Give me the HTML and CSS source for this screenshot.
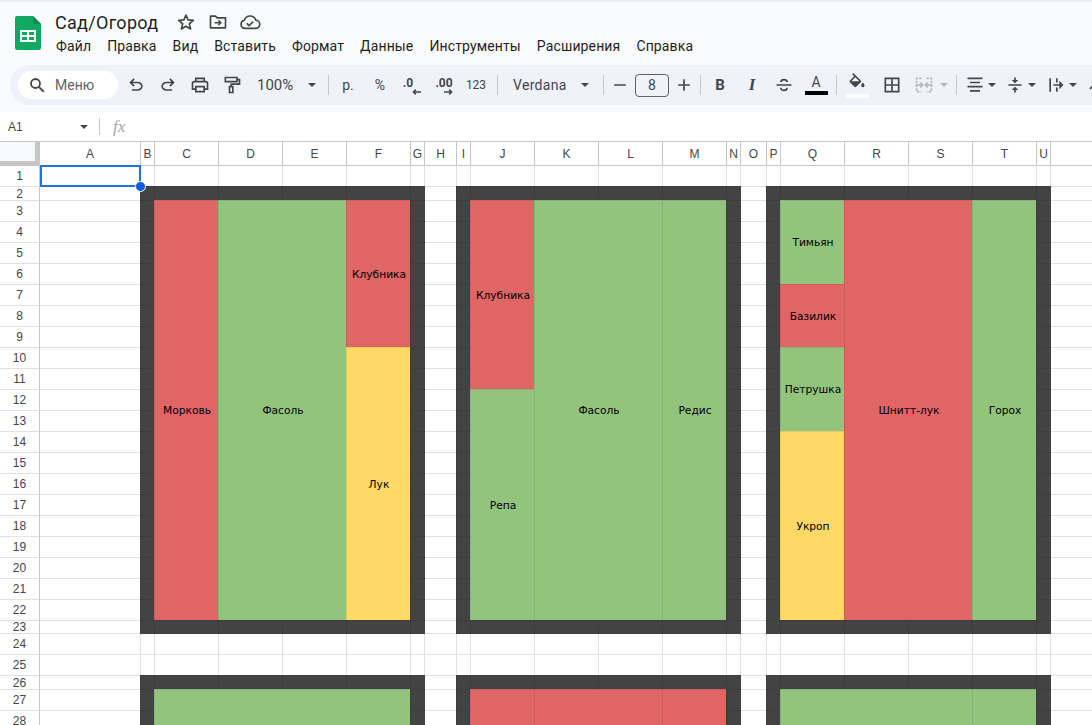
FILE: index.html
```html
<!DOCTYPE html>
<html lang="ru">
  <head>
    <meta charset="UTF-8" />
    <title>Сад/Огород</title>
    <link rel="stylesheet" href="styles.css">
  </head>
  <body>
    <header class="topbar">
      <svg class="logo" viewBox="0 0 26 34" width="26" height="34">
        <path fill="#11a861" d="M2 0h16l8 8v24a2 2 0 0 1-2 2H2a2 2 0 0 1-2-2V2a2 2 0 0 1 2-2z"/>
        <path fill="#0d8a4e" d="M18 0l8 8h-6a2 2 0 0 1-2-2z"/>
        <path fill="#fff" d="M5 14h16v12H5z M7 16v3h5v-3z M14 16v3h5v-3z M7 21v3h5v-3z M14 21v3h5v-3z" fill-rule="evenodd"/>
      </svg>
      <div class="doc">
        <div class="title-row">
          <span class="title">Сад/Огород</span>
          <button class="title-icon">
            <svg viewBox="0 0 24 24" width="20" height="20" fill="none" stroke="#444746" stroke-width="2" stroke-linejoin="round"><path d="M12 3.600l2.500 5.800 6.300.6-4.800 4.100 1.500 6.200-5.500-3.300-5.500 3.300 1.500-6.200-4.800-4.100 6.300-.6z"/></svg>
          </button>
          <button class="title-icon">
            <svg viewBox="0 0 24 24" width="20" height="20" fill="none" stroke="#444746" stroke-width="2" stroke-linejoin="round"><path d="M3 19V5h6l2 2h10v12z"/><path d="M8 13h7M12.500 10l3 3-3 3" stroke-width="1.800"/></svg>
          </button>
          <button class="title-icon">
            <svg viewBox="0 0 24 24" width="22" height="22" fill="none" stroke="#444746" stroke-width="1.800" stroke-linejoin="round"><path d="M6.500 19a4.500 4.500 0 0 1-.6-8.900A6.500 6.500 0 0 1 18.300 10a4.500 4.500 0 0 1-.3 9z"/><path d="M8.500 13.500l2.500 2.500 4.500-4.500"/></svg>
          </button>
        </div>
        <nav class="menu">
          <span>Файл</span>
          <span>Правка</span>
          <span>Вид</span>
          <span>Вставить</span>
          <span>Формат</span>
          <span>Данные</span>
          <span>Инструменты</span>
          <span>Расширения</span>
          <span>Справка</span>
        </nav>
      </div>
    </header>

    <div class="toolbar">
      <div class="search">
        <svg viewBox="0 0 24 24" width="18" height="18" fill="none" stroke="#444746" stroke-width="2.400"><circle cx="10" cy="10" r="6"/><path d="M14.500 14.500L21 21"/></svg>
        <span>Меню</span>
      </div>
      <button class="tool">
        <svg viewBox="0 0 24 24" width="20" height="20" fill="#444746"><path d="M7 19v-2h7.100q1.575 0 2.738-1T18 13.500q0-1.500-1.162-2.500T14.100 10H7.800l2.600 2.600L9 14 4 9l5-5 1.400 1.400L7.800 8h6.300q2.425 0 4.163 1.575Q20 11.150 20 13.500t-1.737 3.925Q16.525 19 14.100 19Z"/></svg>
      </button>
      <button class="tool flip">
        <svg viewBox="0 0 24 24" width="20" height="20" fill="#444746"><path d="M7 19v-2h7.100q1.575 0 2.738-1T18 13.500q0-1.500-1.162-2.500T14.100 10H7.800l2.600 2.600L9 14 4 9l5-5 1.400 1.400L7.800 8h6.300q2.425 0 4.163 1.575Q20 11.150 20 13.500t-1.737 3.925Q16.525 19 14.100 19Z"/></svg>
      </button>
      <button class="tool">
        <svg viewBox="0 0 24 24" width="20" height="20" fill="none" stroke="#444746" stroke-width="2"><path d="M7 8V4h10v4"/><path d="M7 17H3v-7a2 2 0 0 1 2-2h14a2 2 0 0 1 2 2v7h-4"/><path d="M7 14h10v6H7z"/></svg>
      </button>
      <button class="tool">
        <svg viewBox="0 0 24 24" width="20" height="20" fill="none" stroke="#444746" stroke-width="2"><path d="M4 3h14v5H4z"/><path d="M18 5.500h3V11H11v3"/><path d="M9 14h4v7H9z"/></svg>
      </button>
      <div class="select zoom-select"><span>100%</span><i class="caret"></i></div>
      <i class="sep"></i>
      <button class="tool text-tool">р.</button>
      <button class="tool text-tool">%</button>
      <button class="tool decimal less">
        <b>.0</b>
        <svg viewBox="0 0 9 6" width="9" height="6" fill="none" stroke="#444746" stroke-width="1.500"><path d="M9 3H1.500M3.800.6L1.400 3l2.400 2.400"/></svg>
      </button>
      <button class="tool decimal">
        <b>.00</b>
        <svg viewBox="0 0 9 6" width="9" height="6" fill="none" stroke="#444746" stroke-width="1.500"><path d="M0 3h7.500M5.200.6L7.600 3 5.200 5.400"/></svg>
      </button>
      <button class="tool text-tool small">123</button>
      <i class="sep before-font"></i>
      <div class="select font-select"><span>Verdana</span><i class="caret"></i></div>
      <i class="sep after-font"></i>
      <button class="tool">
        <svg viewBox="0 0 24 24" width="20" height="20" fill="#444746"><path d="M5 11h14v2H5z"/></svg>
      </button>
      <div class="font-size">8</div>
      <button class="tool">
        <svg viewBox="0 0 24 24" width="20" height="20" fill="#444746"><path d="M5 11h6V5h2v6h6v2h-6v6h-2v-6H5z"/></svg>
      </button>
      <i class="sep after-size"></i>
      <button class="tool text-tool bold">B</button>
      <button class="tool text-tool italic">I</button>
      <button class="tool">
        <svg viewBox="0 0 24 24" width="20" height="20" fill="none" stroke="#444746" stroke-width="2"><path d="M3 12h18"/><path d="M16 8.500C15.500 6.500 14 5.500 12 5.500S8.500 6.500 8.300 8.500M8 15.500c.5 2 2 3 4 3s3.500-1 3.700-3"/></svg>
      </button>
      <button class="tool text-color">
        <span>A</span>
        <i class="swatch black"></i>
      </button>
      <i class="sep before-fill"></i>
      <button class="tool text-color">
        <svg viewBox="0 0 24 24" width="20" height="20" fill="#444746"><path d="M16.560 8.940L7.620 0 6.210 1.410l2.380 2.380-5.150 5.150c-.59.59-.59 1.540 0 2.120l5.500 5.500c.29.29.68.44 1.060.44s.77-.15 1.060-.44l5.500-5.500c.59-.58.59-1.530 0-2.120zM5.210 10L10 5.210 14.790 10H5.210zM19 11.500s-2 2.170-2 3.500c0 1.100.9 2 2 2s2-.9 2-2c0-1.330-2-3.500-2-3.500z"/></svg>
        <i class="swatch white"></i>
      </button>
      <button class="tool borders">
        <svg viewBox="0 0 24 24" width="20" height="20" fill="none" stroke="#444746" stroke-width="2"><path d="M4 4h16v16H4zM12 4v16M4 12h16"/></svg>
      </button>
      <button class="tool">
        <svg viewBox="0 0 24 24" width="20" height="20" fill="none" stroke="#b4b6b8" stroke-width="2"><path d="M9 4H3v16h6M15 4h6v16h-6" stroke-dasharray="3 1.500"/><path d="M3 12h7M7.500 9l3 3-3 3M21 12h-7M16.500 9l-3 3 3 3"/></svg>
      </button>
      <i class="caret faded"></i>
      <i class="sep before-align"></i>
      <button class="tool narrow">
        <svg viewBox="0 0 24 24" width="20" height="20" fill="#444746"><path d="M3 3h18v2H3zM6 8h12v2H6zM3 13h18v2H3zM6 18h12v2H6z"/></svg>
      </button>
      <i class="caret after-narrow"></i>
      <button class="tool narrow spaced">
        <svg viewBox="0 0 24 24" width="20" height="20" fill="#444746"><path d="M4 11h16v2H4zM11 3h2v3h3l-4 4-4-4h3zM11 21h2v-3h3l-4-4-4 4h3z"/></svg>
      </button>
      <i class="caret after-narrow"></i>
      <button class="tool narrow wrap">
        <svg viewBox="0 0 24 24" width="20" height="20" fill="#444746"><path d="M4 4h2v16H4zM12 4h2v5h-2zM12 15h2v5h-2zM9 11h7V7l5 5-5 5v-4H9z"/></svg>
      </button>
      <i class="caret after-narrow"></i>
      <button class="tool narrow spaced">
        <svg viewBox="0 0 24 24" width="20" height="20" fill="#444746"><path d="M4 16l5-5 1.500 1.500-5 5z"/></svg>
      </button>
    </div>

    <div class="formula-bar">
      <span class="name-box">A1</span>
      <i class="caret"></i>
      <i class="sep"></i>
      <span class="fx">fx</span>
    </div>

    <main class="sheet-wrap">
      <div id="sheet" class="sheet"></div>
      <div class="selection"><i class="handle"></i></div>
    </main>

    <script src="script.js"></script>
  </body>
</html>
```

FILE: styles.css
```css
* {
  box-sizing: border-box;
}

html,
body {
  margin: 0;
  height: 100%;
}

body {
  height: 725px;
  overflow: hidden;
  background-color: #f9fbfd;
  color: #1f1f1f;
  font-family: "Liberation Sans", Arial, sans-serif;
}

button {
  border: none;
  background: none;
  padding: 0;
  font: inherit;
  color: inherit;
}

/* Title and menu */
.topbar {
  display: flex;
  height: 65px;
  padding-left: 15px;
  border-top: 2px solid #eceef0;
}

.logo {
  margin-top: 14px;
  flex: none;
}

.doc {
  margin-left: 14px;
  font-family: Roboto, sans-serif;
}

.title-row {
  display: flex;
  align-items: center;
  height: 26px;
  margin-top: 7px;
}

.title {
  width: 103px;
  font-size: 18px;
  letter-spacing: 0.3px;
  white-space: nowrap;
}

.title-icon {
  display: flex;
  align-items: center;
  justify-content: center;
  width: 32px;
  height: 26px;
}

.title-icon:first-of-type {
  margin-left: 12px;
}

.menu {
  display: flex;
  gap: 16px;
  margin-top: 1px;
  padding-left: 1px;
  font-size: 14px;
  line-height: 20px;
  letter-spacing: 0.13px;
}

/* Toolbar */
.toolbar {
  display: flex;
  align-items: center;
  height: 40px;
  margin-left: 10px;
  padding-left: 8px;
  overflow: hidden;
  background-color: #eff3f9;
  border-radius: 20px 0 0 20px;
  color: #444746;
}

.search {
  display: flex;
  align-items: center;
  flex: none;
  width: 100px;
  height: 28px;
  margin-right: 2px;
  padding-left: 10px;
  gap: 9px;
  background-color: #fff;
  border-radius: 14px;
  font-family: Roboto, sans-serif;
  font-size: 14px;
  color: #5f6368;
}

.tool {
  display: flex;
  align-items: center;
  justify-content: center;
  flex: none;
  width: 32px;
  height: 28px;
}

.flip svg {
  transform: scaleX(-1);
}

.text-tool {
  font-family: Roboto, sans-serif;
  font-size: 14px;
}

.small {
  font-size: 12px;
}

.bold {
  font-size: 15px;
  font-weight: 700;
}

.italic {
  font-family: "Liberation Serif", serif;
  font-size: 17px;
  font-style: italic;
  font-weight: 700;
}

.decimal {
  flex-direction: column;
  padding-top: 1px;
  font-family: Roboto, sans-serif;
  font-size: 12px;
  line-height: 12px;
}

.decimal svg {
  display: block;
  margin-left: 8px;
}

.decimal.less b {
  margin-right: 8px;
}

.select {
  display: flex;
  align-items: center;
  justify-content: space-between;
  flex: none;
  font-family: Roboto, sans-serif;
}

.zoom-select {
  width: 72px;
  padding: 0 4px 0 9px;
  font-size: 15px;
}

.font-select {
  width: 90px;
  padding: 0 6px 0 8px;
  font-size: 14px;
  letter-spacing: 0.3px;
}

.caret {
  flex: none;
  width: 0;
  height: 0;
  border-left: 4.500px solid transparent;
  border-right: 4.500px solid transparent;
  border-top: 4.500px solid #444746;
}

.caret.faded {
  border-top-color: #b4b6b8;
}

.caret.after-narrow {
  margin-left: 1px;
}

.sep {
  flex: none;
  width: 1px;
  height: 20px;
  margin: 0 3px 0 8px;
  background-color: #c7c7c7;
}

.sep.before-font {
  margin: 0 7px 0 5px;
}

.sep.after-font {
  margin: 0 0 0 8px;
}

.sep.after-size {
  margin: 0 3px 0 0;
}

.sep.before-fill {
  margin: 0 4px 0 4px;
}

.sep.before-align {
  margin: 0 4px 0 8px;
}

.font-size {
  flex: none;
  width: 34px;
  height: 23px;
  margin: 0 -1px;
  border: 1px solid #5f6368;
  border-radius: 4px;
  font-family: Roboto, sans-serif;
  font-size: 14px;
  line-height: 21px;
  text-align: center;
}

.text-color {
  flex-direction: column;
  gap: 1px;
  font-family: Roboto, sans-serif;
  font-size: 14px;
  line-height: 15px;
}

.swatch {
  display: block;
  width: 23px;
  height: 4px;
}

.swatch.black {
  background-color: #000;
}

.swatch.white {
  background-color: #fff;
}

.borders {
  margin-left: 3px;
}

.narrow {
  width: 24px;
  margin-left: 2px;
}

.narrow.spaced {
  margin-left: 7px;
}

.narrow.wrap {
  margin-left: 8px;
}

/* Formula bar */
.formula-bar {
  display: flex;
  align-items: center;
  height: 29px;
  margin-top: 7px;
  padding-left: 8px;
  background-color: #fff;
  font-size: 12px;
  color: #444746;
}

.name-box {
  width: 72px;
}

.formula-bar .sep {
  height: 17px;
  margin: 0 13px 0 11px;
}

.fx {
  font-family: "Liberation Serif", serif;
  font-size: 17px;
  font-style: italic;
  color: #a3a5a7;
}

/* Sheet */
.sheet-wrap {
  position: relative;
  overflow: hidden;
  height: 584px;
  background-color: #fff;
}

.sheet {
  display: grid;
  grid-template-columns:
    39px 101px 14px repeat(4, 64px) 14px 32px 14px repeat(4, 64px) 14px 26px 14px repeat(4, 64px) 14px 100px;
  grid-template-rows: 24px 21px 14px repeat(20, 21px) 13px 21px 21px 14px 21px 21px;
  width: 1150px;
}

.cell {
  border-left: 1px solid #e1e1e1;
  border-top: 1px solid #e1e1e1;
  min-width: 0;
  min-height: 0;
}

.cell.top {
  border-top-color: #c4c7c5;
}

.cell.first {
  border-left-color: #c4c7c5;
}

.corner,
.col-head,
.row-head {
  display: flex;
  align-items: center;
  justify-content: center;
  overflow: hidden;
  background-color: #fff;
  font-size: 12px;
  color: #444746;
}

.corner {
  border-top: 1px solid #c4c7c5;
  border-right: 4px solid #c4c7c5;
  border-bottom: 4px solid #c4c7c5;
  background-color: #f8f9fa;
}

.col-head {
  border-top: 1px solid #c4c7c5;
  border-left: 1px solid #c4c7c5;
}

.row-head {
  border-top: 1px solid #e1e1e1;
}

.row-head.top {
  border-top-color: #c4c7c5;
}

.fill {
  display: flex;
  align-items: center;
  justify-content: center;
  z-index: 2;
  padding-left: 1px;
  border-left-color: rgba(0, 0, 0, 0.08);
  border-top-color: rgba(0, 0, 0, 0.08);
  font-family: "DejaVu Sans", Verdana, sans-serif;
  font-size: 10.670px;
  color: #000;
}

/* The frame also covers the gridline on its right and bottom */
.fill.dark {
  z-index: 1;
  margin: 0 -1px -1px 0;
  background-color: #434343;
}

.red {
  background-color: #e06666;
}

.green {
  background-color: #93c47d;
}

.yellow {
  background-color: #ffd966;
}

/* Selected cell A1 */
.selection {
  position: absolute;
  left: 40px;
  top: 24px;
  width: 101px;
  height: 22px;
  z-index: 3;
  border: 2px solid #1a73e8;
}

.handle {
  position: absolute;
  right: -7px;
  bottom: -7px;
  width: 11px;
  height: 11px;
  background-color: #0b5ed7;
  border: 1px solid #fff;
  border-radius: 50%;
}
```

FILE: script.js
```js
const sheet = document.getElementById("sheet");

// The last column runs off the window, its letter is never seen
const columns = "ABCDEFGHIJKLMNOPQRSTU".split("").concat("");
const rowCount = 28;

// Merged coloured cells: column, row, width, height
const plots = [
  ["C", 3, 1, 20, "red", "Морковь"],
  ["D", 3, 2, 20, "green", "Фасоль"],
  ["F", 3, 1, 7, "red", "Клубника"],
  ["F", 10, 1, 13, "yellow", "Лук"],
  ["J", 3, 1, 9, "red", "Клубника"],
  ["J", 12, 1, 11, "green", "Репа"],
  ["K", 3, 2, 20, "green", "Фасоль"],
  ["M", 3, 1, 20, "green", "Редис"],
  ["Q", 3, 1, 4, "green", "Тимьян"],
  ["Q", 7, 1, 3, "red", "Базилик"],
  ["Q", 10, 1, 4, "green", "Петрушка"],
  ["Q", 14, 1, 9, "yellow", "Укроп"],
  ["R", 3, 2, 20, "red", "Шнитт-лук"],
  ["T", 3, 1, 20, "green", "Горох"],
  ["C", 27, 4, 2, "green", ""],
  ["J", 27, 1, 2, "red", ""],
  ["K", 27, 2, 2, "red", ""],
  ["M", 27, 1, 2, "red", ""],
  ["Q", 27, 3, 2, "green", ""],
  ["T", 27, 1, 2, "green", ""],
];

const frameColumns = [
  ["B", "G"],
  ["I", "N"],
  ["P", "U"],
];
const frameRows = [
  [2, 23],
  [26, 29],
];

function colIndex(letter) {
  return columns.indexOf(letter);
}

function isFrame(col, row) {
  return frameRows.some(([top, bottom]) =>
    frameColumns.some(([left, right]) => {
      const inside =
        row >= top && row <= bottom && col >= colIndex(left) && col <= colIndex(right);
      const edge =
        row === top || row === bottom || col === colIndex(left) || col === colIndex(right);
      return inside && edge;
    })
  );
}

function addCell(className, text, col, row, width, height) {
  const cell = document.createElement("div");
  cell.className = className;
  cell.textContent = text || "";
  cell.style.gridColumn = `${col + 2} / span ${width || 1}`;
  cell.style.gridRow = `${row + 1} / span ${height || 1}`;
  sheet.appendChild(cell);
}

function renderSheet() {
  const covered = new Set();
  plots.forEach(([letter, row, width, height]) => {
    for (let y = row; y < row + height; y++) {
      for (let x = colIndex(letter); x < colIndex(letter) + width; x++) {
        covered.add(`${x}:${y}`);
      }
    }
  });

  addCell("corner", "", -1, 0);
  columns.forEach((letter, col) => addCell("col-head", letter, col, 0));

  for (let row = 1; row <= rowCount; row++) {
    addCell(row === 1 ? "row-head top" : "row-head", row, -1, row);

    columns.forEach((letter, col) => {
      const plot = plots.find((p) => p[0] === letter && p[1] === row);
      if (plot) {
        addCell(`cell fill ${plot[4]}`, plot[5], col, row, plot[2], plot[3]);
      } else if (covered.has(`${col}:${row}`)) {
        return;
      } else if (isFrame(col, row)) {
        addCell("cell fill dark", "", col, row);
      } else {
        let className = "cell";
        if (row === 1) className += " top";
        if (col === 0) className += " first";
        addCell(className, "", col, row);
      }
    });
  }
}

renderSheet();
```
